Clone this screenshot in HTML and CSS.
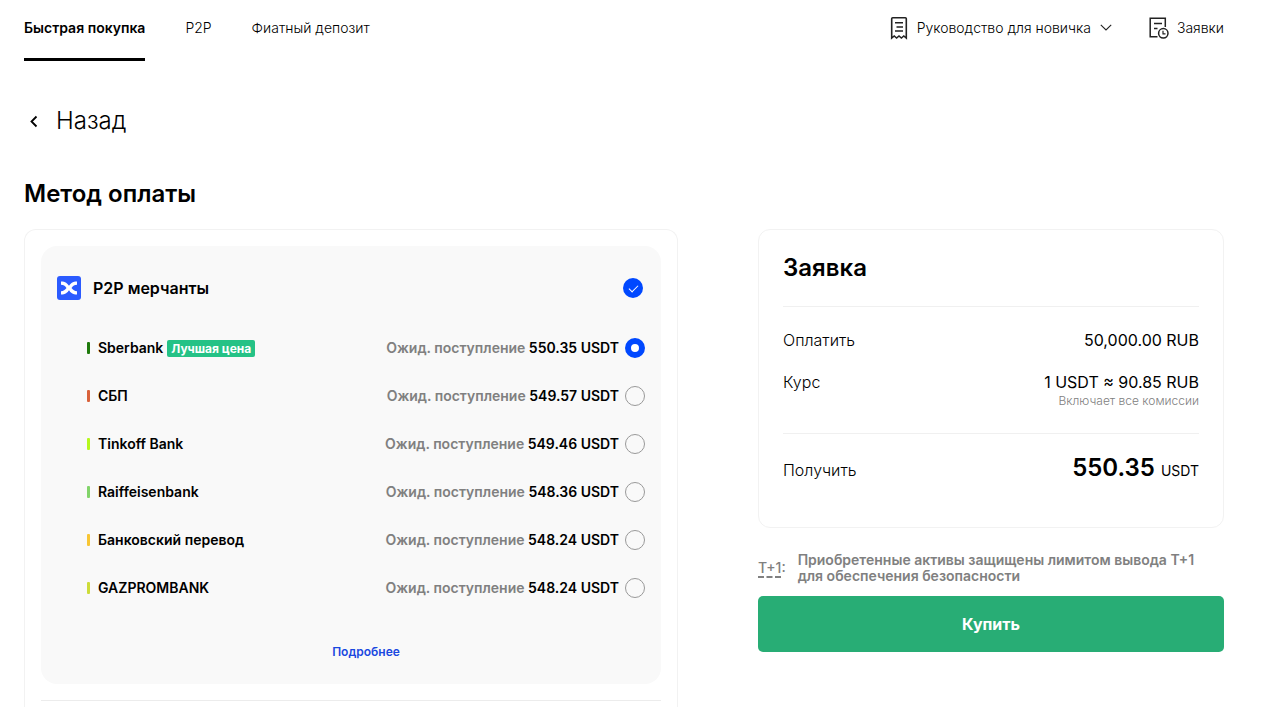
FILE: index.html
```html
<!DOCTYPE html>
<html lang="ru">
<head>
    <meta charset="UTF-8">
    <meta name="viewport" content="width=device-width, initial-scale=1.0">
    <title>Быстрая покупка</title>
    <link rel="stylesheet" href="styles.css">
</head>
<body>
    <header class="navbar">
        <nav class="tabs">
            <a href="#" class="active">Быстрая покупка</a>
            <a href="#">P2P</a>
            <a href="#">Фиатный депозит</a>
        </nav>
        <div class="nav-right">
            <a href="#" class="nav-link">
                <svg width="18" height="24" viewBox="0 0 18 24" fill="none" stroke="#222" stroke-width="1.6">
                    <path d="M1.7 22V2.8Q1.7 1.8 2.7 1.8H15.3Q16.3 1.8 16.3 2.8V22L13.8 20L11.4 22L9 20L6.6 22L4.2 20Z"/>
                    <path d="M5 6.8H13M6.5 11H13M5 15H13"/>
                </svg>
                Руководство для новичка
                <svg width="12" height="8" viewBox="0 0 12 8" fill="none" stroke="#222" stroke-width="1.1">
                    <path d="M0.8 0.8L6 6L11.2 0.8"/>
                </svg>
            </a>
            <a href="#" class="nav-link orders">
                <svg width="20" height="24" viewBox="0 0 20 24" fill="none" stroke="#222" stroke-width="1.5">
                    <path d="M16.3 11V2.2H1.2V20.8H8.5M5 7.5H13M5 12.5H8.5"/>
                    <circle cx="14.3" cy="17.3" r="4.7"/>
                    <path d="M14 14.8V17.8H16.5" stroke-width="1.2"/>
                </svg>
                Заявки
            </a>
        </div>
    </header>

    <main class="container">
        <a href="#" class="back">
            <svg width="20" height="20" viewBox="0 0 20 20" fill="none" stroke="#000" stroke-width="1.8">
                <path d="M12.5 5.5L7.5 10.5L12.5 15.5"/>
            </svg>
            Назад
        </a>
        <h1>Метод оплаты</h1>

        <div class="columns">
            <form class="methods">
                <div class="panel">
                    <div class="panel-head">
                        <svg width="24" height="24" viewBox="0 0 24 24">
                            <rect width="24" height="24" rx="3" fill="#2b5bff"/>
                            <path d="M4 5.5C8.5 5.5 10.5 7.5 12 9.8C13.5 7.5 15.5 5.5 20 5.5V8.8C17.5 8.8 16 10 14.5 12C16 14 17.5 15.2 20 15.2V18.5C15.5 18.5 13.5 16.5 12 14.2C10.5 16.5 8.5 18.5 4 18.5V15.2C6.5 15.2 8 14 9.5 12C8 10 6.5 8.8 4 8.8Z" fill="#fff"/>
                        </svg>
                        <label for="merchants">P2P мерчанты</label>
                        <input type="checkbox" id="merchants" checked>
                    </div>
                    <label class="method">
                        <span class="mark sber"></span>
                        <span class="name">Sberbank</span>
                        <span class="best">Лучшая цена</span>
                        <span class="amount">Ожид. поступление <b>550.35 USDT</b></span>
                        <input type="radio" name="method" checked>
                    </label>
                    <label class="method">
                        <span class="mark sbp"></span>
                        <span class="name">СБП</span>
                        <span class="amount">Ожид. поступление <b>549.57 USDT</b></span>
                        <input type="radio" name="method">
                    </label>
                    <label class="method">
                        <span class="mark tinkoff"></span>
                        <span class="name">Tinkoff Bank</span>
                        <span class="amount">Ожид. поступление <b>549.46 USDT</b></span>
                        <input type="radio" name="method">
                    </label>
                    <label class="method">
                        <span class="mark raiffeisen"></span>
                        <span class="name">Raiffeisenbank</span>
                        <span class="amount">Ожид. поступление <b>548.36 USDT</b></span>
                        <input type="radio" name="method">
                    </label>
                    <label class="method">
                        <span class="mark transfer"></span>
                        <span class="name">Банковский перевод</span>
                        <span class="amount">Ожид. поступление <b>548.24 USDT</b></span>
                        <input type="radio" name="method">
                    </label>
                    <label class="method">
                        <span class="mark gazprom"></span>
                        <span class="name">GAZPROMBANK</span>
                        <span class="amount">Ожид. поступление <b>548.24 USDT</b></span>
                        <input type="radio" name="method">
                    </label>
                    <a href="#" class="more">Подробнее</a>
                </div>
                <hr>
            </form>

            <aside>
                <section class="order">
                    <h2>Заявка</h2>
                    <dl class="details">
                        <div class="row">
                            <dt>Оплатить</dt>
                            <dd>50,000.00 RUB</dd>
                        </div>
                        <div class="row">
                            <dt>Курс</dt>
                            <dd>1 USDT ≈ 90.85 RUB<small>Включает все комиссии</small></dd>
                        </div>
                    </dl>
                    <dl class="total">
                        <div class="row">
                            <dt>Получить</dt>
                            <dd><strong>550.35</strong> USDT</dd>
                        </div>
                    </dl>
                </section>
                <div class="note">
                    <span class="term"><u>T+1</u>:</span>
                    <p>Приобретенные активы защищены лимитом вывода T+1 для обеспечения безопасности</p>
                </div>
                <button type="button" class="buy">Купить</button>
            </aside>
        </div>
    </main>
</body>
</html>
```
FILE: styles.css
```css
* {
    box-sizing: border-box;
}
body {
    margin: 0;
    min-height: 100vh;
    display: flex;
    flex-direction: column;
    font-family: Inter, sans-serif;
    font-size: 14px;
    line-height: 20px;
    color: #000;
    background-color: #fff;
}
a {
    color: inherit;
    text-decoration: none;
}
svg {
    flex: none;
}
.navbar {
    display: flex;
    justify-content: space-between;
    padding: 0 39px 0 24px;
    font-weight: 300;
}
.tabs {
    display: flex;
    gap: 40px;
}
.tabs a {
    padding: 18px 0 20px;
    border-bottom: 3px solid transparent;
}
.tabs .active {
    font-weight: 600;
    border-bottom-color: #000;
}
.nav-right {
    display: flex;
    gap: 37px;
    height: 56px;
}
.nav-link {
    display: flex;
    align-items: center;
    gap: 9px;
}
.orders {
    gap: 8px;
}
.container {
    flex: 1;
    display: flex;
    flex-direction: column;
    padding: 0 39px 0 24px;
}
.back {
    display: flex;
    align-items: center;
    align-self: flex-start;
    gap: 12px;
    margin-top: 44px;
    font-size: 24px;
    line-height: 32px;
    font-weight: 300;
}
h1,
h2 {
    margin: 0;
    font-size: 24px;
    line-height: 32px;
    font-weight: 600;
}
h1 {
    margin: 41px 0 19px;
}
.columns {
    flex: 1;
    display: grid;
    grid-template-columns: minmax(0, 1fr) 466px;
    gap: 80px;
}
.methods {
    padding: 16px 16px 0;
    border: 1px solid #f2f2f2;
    border-bottom: none;
    border-radius: 12px 12px 0 0;
}
.panel {
    padding: 16px;
    border-radius: 16px;
    background-color: #f9f9f9;
}
.panel-head {
    display: flex;
    align-items: center;
    gap: 12px;
    padding: 14px 2px 12px 0;
    margin-bottom: 12px;
    font-size: 16px;
    line-height: 24px;
    font-weight: 600;
}
.panel-head input {
    margin-left: auto;
}
.method {
    display: flex;
    align-items: center;
    height: 48px;
    padding-left: 30px;
    font-weight: 600;
}
.mark {
    width: 3px;
    height: 12px;
    margin-right: 8px;
    border-radius: 1px;
}
.sber {
    background-color: #1f7a0c;
}
.sbp {
    background-color: #d9623b;
}
.tinkoff {
    background-color: #b6f81e;
}
.raiffeisen {
    background-color: #82d46a;
}
.transfer {
    background-color: #f8c634;
}
.gazprom {
    background-color: #cddc39;
}
.best {
    margin-left: 4px;
    padding: 0 4px;
    border-radius: 2px;
    background-color: #25c286;
    color: #fff;
    font-size: 12px;
    line-height: 17px;
    font-weight: 700;
}
.amount {
    margin-left: auto;
    margin-right: 6px;
    color: #808080;
}
.amount b {
    color: #000;
    font-weight: 600;
}
input {
    appearance: none;
    flex: none;
    width: 20px;
    height: 20px;
    margin: 0;
    border: 1px solid #999;
    border-radius: 50%;
}
input[type="radio"]:checked {
    border: 6px solid #0048ff;
    background-color: #fff;
}
input[type="checkbox"]:checked {
    display: flex;
    align-items: center;
    justify-content: center;
    border: none;
    background-color: #0048ff;
}
input[type="checkbox"]:checked::after {
    content: "";
    width: 8px;
    height: 4px;
    margin-bottom: 2px;
    border: solid #fff;
    border-width: 0 0 1px 1px;
    transform: rotate(-45deg);
}
.more {
    display: block;
    width: max-content;
    margin: 30px auto 6px;
    padding-left: 30px;
    color: #1a48e0;
    font-size: 12px;
    font-weight: 600;
}
hr {
    height: 1px;
    margin: 16px 0 0;
    border: none;
    background-color: #ececec;
}
.order {
    padding: 22px 24px 44px;
    border: 1px solid #f2f2f2;
    border-radius: 12px;
}
dl {
    margin: 0;
    border-top: 1px solid #f0f0f0;
    font-size: 16px;
    line-height: 24px;
}
.details {
    display: grid;
    gap: 18px;
    margin-top: 22px;
    padding: 21px 0 26px;
}
.total {
    padding-top: 22px;
}
.row {
    display: flex;
    justify-content: space-between;
}
dt {
    font-weight: 300;
}
dd {
    margin: 0;
    text-align: right;
}
dd small {
    display: block;
    color: #808080;
    font-size: 12px;
    line-height: 13px;
    font-weight: 300;
}
.total .row {
    align-items: baseline;
}
.total dd {
    font-size: 14px;
}
.total strong {
    margin-right: 2px;
    font-size: 24px;
    font-weight: 600;
}
.note {
    display: flex;
    align-items: center;
    gap: 12px;
    margin: 24px 0 12px;
    padding-right: 16px;
    color: #808080;
    line-height: 16px;
    font-weight: 500;
}
.note p {
    margin: 0;
    font-weight: 600;
}
.term {
    white-space: nowrap;
}
.term u {
    text-decoration: none;
    border-bottom: 2px dashed #808080;
}
.buy {
    width: 100%;
    height: 56px;
    border: none;
    border-radius: 5px;
    background-color: #28ad75;
    color: #fff;
    font-family: inherit;
    font-size: 16px;
    font-weight: 700;
    cursor: pointer;
}
```
